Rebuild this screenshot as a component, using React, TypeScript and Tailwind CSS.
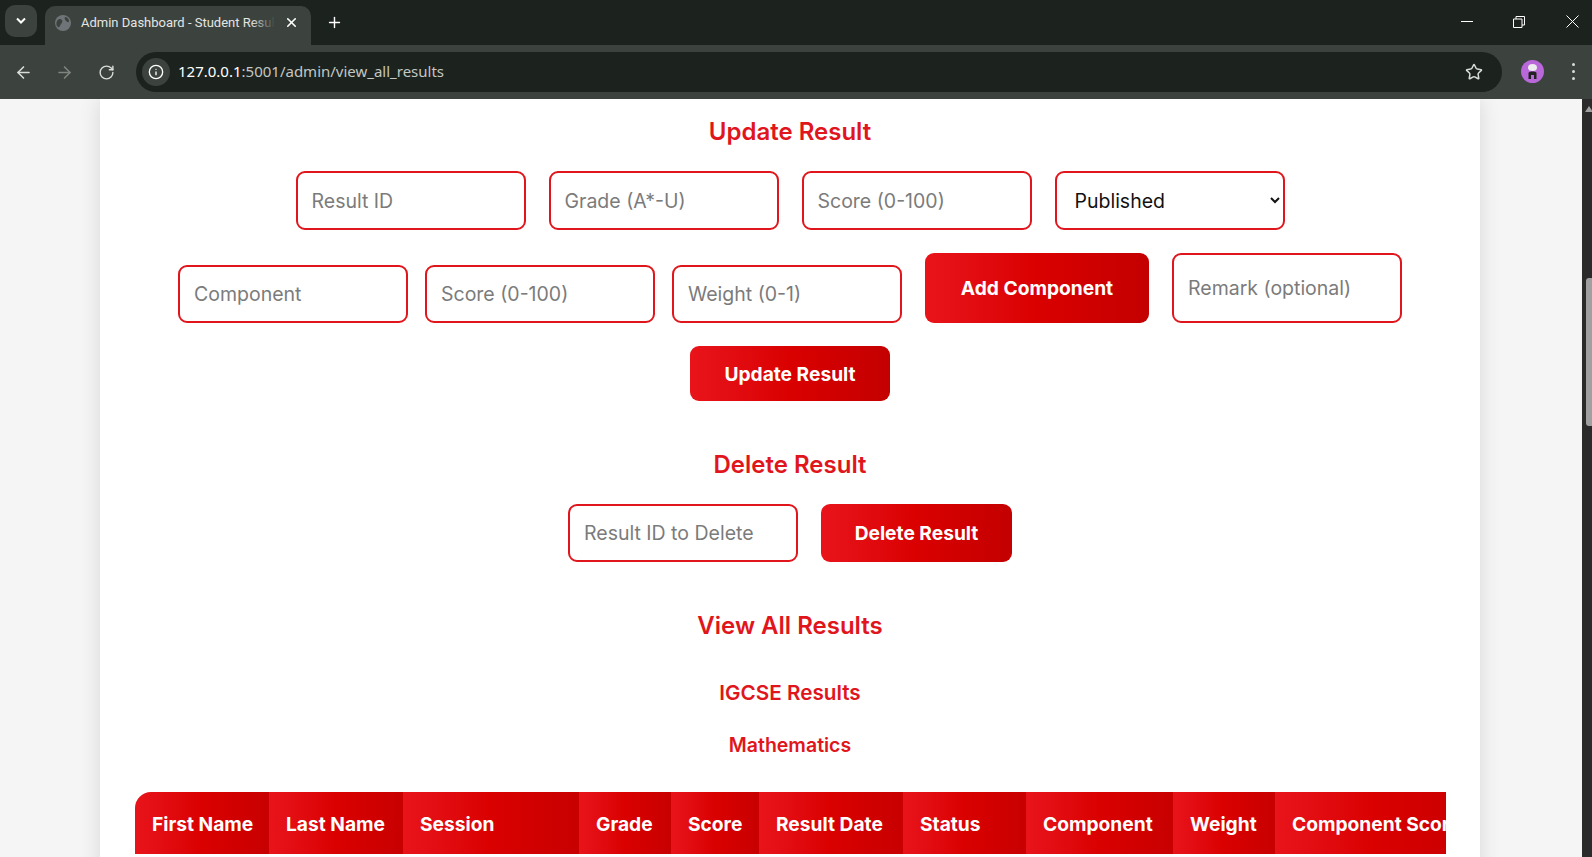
import { ArrowLeft, ArrowRight, Info, Plus, RotateCw, Star, X } from 'lucide-react'

const pageFont = "font-['Inter','Liberation_Sans',sans-serif]"
const chromeFont = "font-['Roboto','Liberation_Sans',sans-serif]"

const fieldClass =
  'w-[230px] rounded-[9px] border-2 border-[#e0161c] bg-white px-[14px] text-[19.500px] text-[#111111] outline-none placeholder:text-[#7b7b7b]'
const buttonClass =
  'flex items-center justify-center rounded-[9px] bg-linear-to-r from-[#e8141a] via-[#da0000] to-[#c40000] pt-px text-[19.200px] font-bold text-white'

const columns = [
  { label: 'First Name', width: 'w-[134px]' },
  { label: 'Last Name', width: 'w-[134px]' },
  { label: 'Session', width: 'w-[176px]' },
  { label: 'Grade', width: 'w-[92px]' },
  { label: 'Score', width: 'w-[88px]' },
  { label: 'Result Date', width: 'w-[144px]' },
  { label: 'Status', width: 'w-[123px]' },
  { label: 'Component', width: 'w-[147px]' },
  { label: 'Weight', width: 'w-[102px]' },
  { label: 'Component Score', width: 'w-[200px]' },
]

function BrowserChrome() {
  return (
    <div className={`${chromeFont} shrink-0`}>
      <div className="flex h-[45px] items-end bg-[#1c231f] pl-[5px]">
        <div className="mb-[8px] flex h-[32px] w-[32px] items-center justify-center rounded-[10px] bg-[#3c423d]">
          <svg width="12" height="8" viewBox="0 0 12 8" fill="none" stroke="white" strokeWidth="2">
            <path d="M2 1.5l4 4 4-4" />
          </svg>
        </div>
        <div className="ml-[8px] flex h-[39px] w-[266px] items-center rounded-t-[10px] bg-[#3c423d] pb-[6px] pl-[9px]">
          <svg width="16" height="16" viewBox="0 0 16 16" className="ml-[1px]">
            <circle cx="8" cy="8" r="8" fill="#6f7478" />
            <path d="M2 6c2-3 4-2 5-1s0 3-1 4-1 4-3 3-2-4-1-6zM10 2c2 0 4 2 4 4s-2 1-3 0-2-3-1-4z" fill="#3c423d" />
          </svg>
          <div className="relative ml-[10px] w-[194px] overflow-hidden text-[13px] whitespace-nowrap text-[#e4e6e3]">
            Admin Dashboard - Student Result
            <div className="absolute inset-y-0 right-0 w-[24px] bg-linear-to-r from-transparent to-[#3c423d]" />
          </div>
          <X size={15} strokeWidth={2.5} className="ml-[9px] text-white" />
        </div>
        <Plus size={17} strokeWidth={2} className="mb-[14px] ml-[15px] text-white" />
        <div className="mb-[17px] ml-auto flex items-center text-white">
          <div className="h-px w-[12px] bg-white" />
          <svg width="12" height="12" viewBox="0 0 12 12" fill="none" stroke="white" className="ml-[40px]">
            <path d="M.5 3h8.500v8.500H.5zM3 3V.5h8.500V9H9" />
          </svg>
          <svg width="13" height="13" viewBox="0 0 13 13" fill="none" stroke="white" className="mr-[13px] ml-[41px]">
            <path d="M.5.500l12 12M12.500.500l-12 12" />
          </svg>
        </div>
      </div>
      <div className="flex h-[54px] items-center bg-[#3c423d]">
        <ArrowLeft size={19} className="ml-[14px] text-[#d9dcd8]" />
        <ArrowRight size={19} className="ml-[22px] text-[#7f847f]" />
        <RotateCw size={17} className="ml-[24px] text-[#d9dcd8]" />
        <div className="mb-px ml-[21px] flex h-[40px] w-[1366px] items-center rounded-full bg-[#1c231f]">
          <div className="ml-[6px] flex h-[28px] w-[28px] items-center justify-center rounded-full bg-[#3c423d]">
            <Info size={16} className="text-white" />
          </div>
          <span className="ml-[8px] font-['Noto_Sans','Liberation_Sans',sans-serif] text-[15px] text-white">
            127.0.0.1<span className="text-[#c4c7c3]">:5001/admin/view_all_results</span>
          </span>
          <Star size={18} className="mr-[19px] ml-auto text-[#d9dcd8]" />
        </div>
        <svg width="23" height="23" viewBox="0 0 23 23" className="mb-px ml-[19px]">
          <circle cx="11.500" cy="11.500" r="11.500" fill="#b868d8" />
          <ellipse cx="11.500" cy="7.500" rx="4.500" ry="3.500" fill="#eeeeee" />
          <path d="M7.500 19v-6c0-2 8-2 8 0v6h-2.500v-4h-3v4z" fill="#222222" />
        </svg>
        <div className="mb-px ml-[28px] flex flex-col gap-[4px]">
          <span className="h-[3px] w-[3px] rounded-full bg-[#d9dcd8]" />
          <span className="h-[3px] w-[3px] rounded-full bg-[#d9dcd8]" />
          <span className="h-[3px] w-[3px] rounded-full bg-[#d9dcd8]" />
        </div>
      </div>
    </div>
  )
}

function Scrollbar() {
  return (
    <div className="flex w-[10px] shrink-0 flex-col bg-[#2b2b2b]">
      <div className="mt-[7px] ml-[3px] h-0 w-0 border-x-[4px] border-b-[6px] border-x-transparent border-b-[#a0a0a0]" />
      <div className="mt-[166px] ml-[4px] h-[148px] w-[6px] rounded-l-[3px] bg-[#a0a0a0]" />
    </div>
  )
}

export default function App() {
  return (
    <div className="flex h-screen w-screen flex-col overflow-hidden">
      <BrowserChrome />
      <div className="flex min-h-0 flex-1">
        <div className={`${pageFont} min-w-0 flex-1 overflow-hidden bg-[#f5f5f5] pl-[100px]`}>
          <div className="h-[800px] w-[1380px] bg-white px-[35px] shadow-[0_0_20px_rgba(0,0,0,0.12)]">
            <h2 className="pt-[17px] text-center text-[24px] leading-[32px] font-semibold text-[#e0161c]">
              Update Result
            </h2>
            <div className="mt-[23px] flex justify-center gap-[23px]">
              <input className={`${fieldClass} h-[59px]`} placeholder="Result ID" />
              <input className={`${fieldClass} h-[59px]`} placeholder="Grade (A*-U)" />
              <input className={`${fieldClass} h-[59px]`} placeholder="Score (0-100)" />
              <select className={`${fieldClass} h-[59px]`} defaultValue="Published">
                <option>Published</option>
                <option>Draft</option>
              </select>
            </div>
            <div className="mt-[23px] flex items-end justify-center">
              <input className={`${fieldClass} h-[58px]`} placeholder="Component" />
              <input className={`${fieldClass} ml-[17px] h-[58px]`} placeholder="Score (0-100)" />
              <input className={`${fieldClass} ml-[17px] h-[58px]`} placeholder="Weight (0-1)" />
              <button type="button" className={`${buttonClass} ml-[23px] h-[70px] w-[224px]`}>
                Add Component
              </button>
              <input className={`${fieldClass} ml-[23px] h-[70px]`} placeholder="Remark (optional)" />
            </div>
            <div className="mt-[23px] flex justify-center">
              <button type="button" className={`${buttonClass} h-[55px] w-[200px]`}>
                Update Result
              </button>
            </div>
            <h2 className="mt-[48px] text-center text-[24px] leading-[32px] font-semibold text-[#e0161c]">
              Delete Result
            </h2>
            <div className="mt-[23px] flex justify-center gap-[23px]">
              <input className={`${fieldClass} h-[58px]`} placeholder="Result ID to Delete" />
              <button type="button" className={`${buttonClass} h-[58px] w-[191px]`}>
                Delete Result
              </button>
            </div>
            <h2 className="mt-[48px] text-center text-[24px] leading-[32px] font-semibold text-[#e0161c]">
              View All Results
            </h2>
            <h3 className="mt-[37px] text-center text-[20.700px] leading-[28px] font-semibold text-[#e0161c]">
              IGCSE Results
            </h3>
            <h4 className="mt-[26px] text-center text-[19.500px] leading-[24px] font-semibold text-[#e0161c]">
              Mathematics
            </h4>
            <div className="mt-[35px] w-[1311px] overflow-hidden rounded-tl-[16px]">
              <table className="w-[1340px] table-fixed border-collapse">
                <thead>
                  <tr>
                    {columns.map((column) => (
                      <th
                        key={column.label}
                        className={`${column.width} h-[62px] bg-linear-to-r from-[#e8141a] via-[#da0000] to-[#c80000] px-[17px] pt-[2px] text-left text-[19.200px] font-bold whitespace-nowrap text-white`}
                      >
                        {column.label}
                      </th>
                    ))}
                  </tr>
                </thead>
              </table>
            </div>
          </div>
        </div>
        <Scrollbar />
      </div>
    </div>
  )
}
